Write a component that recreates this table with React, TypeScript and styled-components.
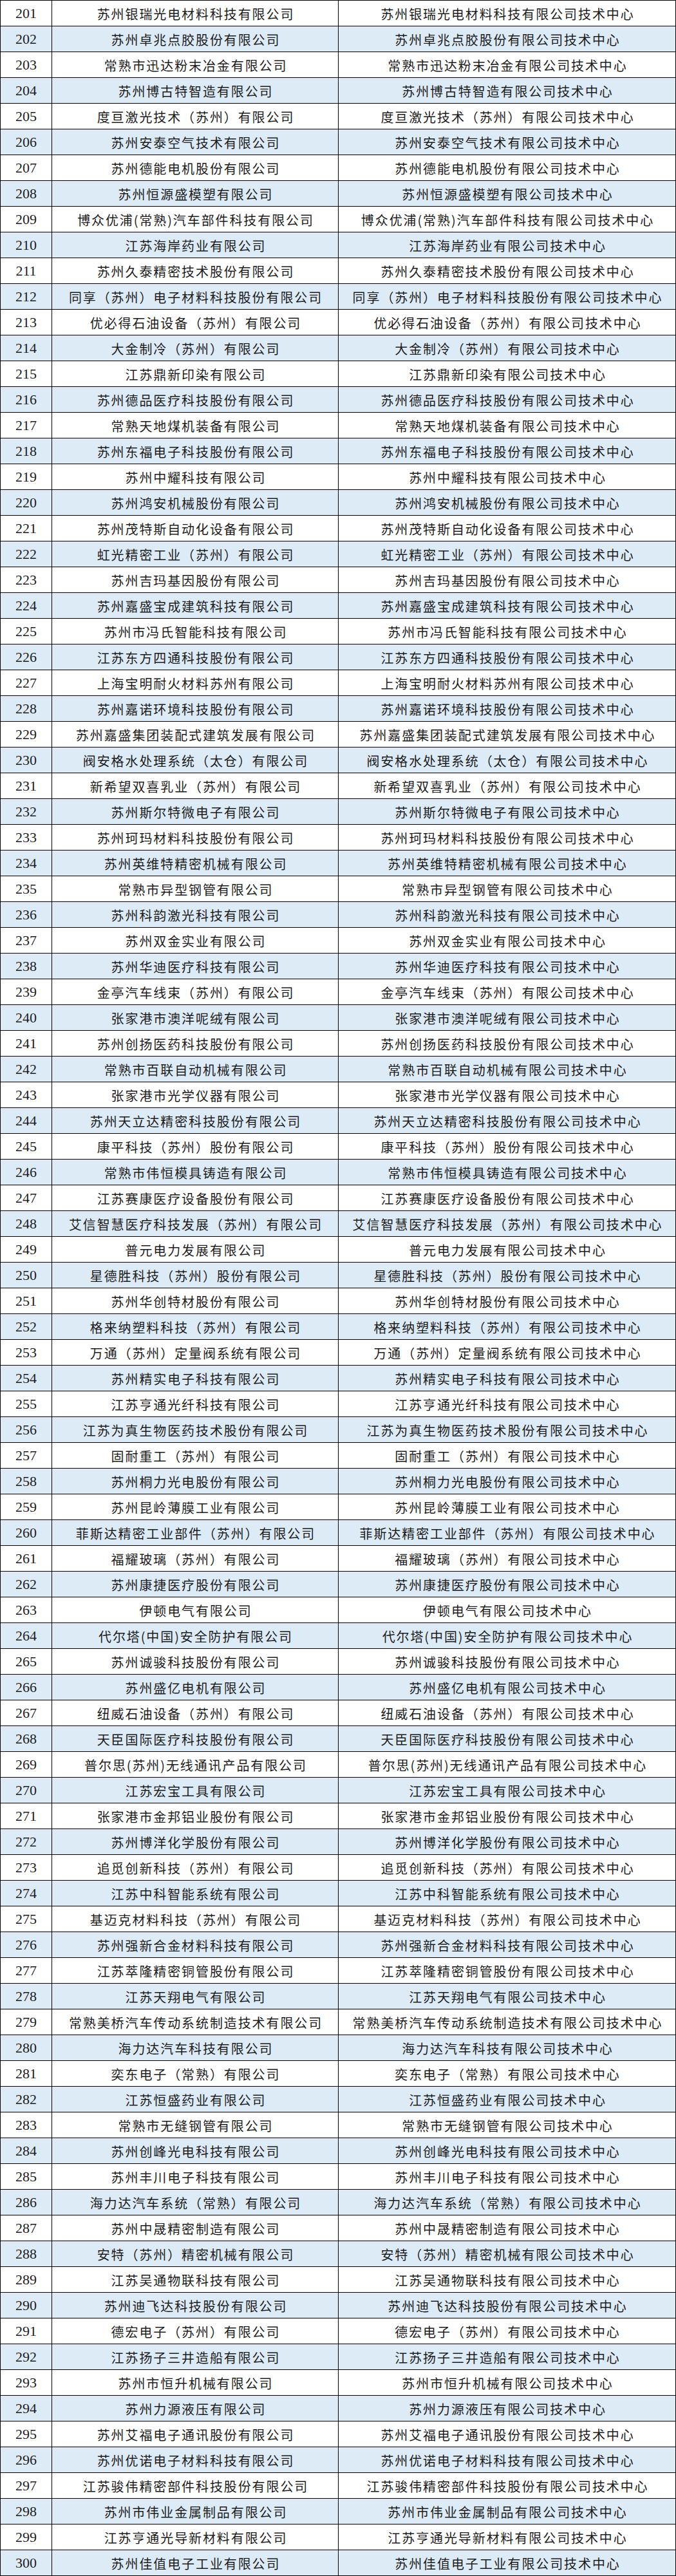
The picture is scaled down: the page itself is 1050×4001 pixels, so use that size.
import React from 'react';
import styled, { createGlobalStyle } from 'styled-components';

const companies: string[] = [
  '苏州银瑞光电材料科技有限公司',
  '苏州卓兆点胶股份有限公司',
  '常熟市迅达粉末冶金有限公司',
  '苏州博古特智造有限公司',
  '度亘激光技术（苏州）有限公司',
  '苏州安泰空气技术有限公司',
  '苏州德能电机股份有限公司',
  '苏州恒源盛模塑有限公司',
  '博众优浦(常熟)汽车部件科技有限公司',
  '江苏海岸药业有限公司',
  '苏州久泰精密技术股份有限公司',
  '同享（苏州）电子材料科技股份有限公司',
  '优必得石油设备（苏州）有限公司',
  '大金制冷（苏州）有限公司',
  '江苏鼎新印染有限公司',
  '苏州德品医疗科技股份有限公司',
  '常熟天地煤机装备有限公司',
  '苏州东福电子科技股份有限公司',
  '苏州中耀科技有限公司',
  '苏州鸿安机械股份有限公司',
  '苏州茂特斯自动化设备有限公司',
  '虹光精密工业（苏州）有限公司',
  '苏州吉玛基因股份有限公司',
  '苏州嘉盛宝成建筑科技有限公司',
  '苏州市冯氏智能科技有限公司',
  '江苏东方四通科技股份有限公司',
  '上海宝明耐火材料苏州有限公司',
  '苏州嘉诺环境科技股份有限公司',
  '苏州嘉盛集团装配式建筑发展有限公司',
  '阀安格水处理系统（太仓）有限公司',
  '新希望双喜乳业（苏州）有限公司',
  '苏州斯尔特微电子有限公司',
  '苏州珂玛材料科技股份有限公司',
  '苏州英维特精密机械有限公司',
  '常熟市异型钢管有限公司',
  '苏州科韵激光科技有限公司',
  '苏州双金实业有限公司',
  '苏州华迪医疗科技有限公司',
  '金亭汽车线束（苏州）有限公司',
  '张家港市澳洋呢绒有限公司',
  '苏州创扬医药科技股份有限公司',
  '常熟市百联自动机械有限公司',
  '张家港市光学仪器有限公司',
  '苏州天立达精密科技股份有限公司',
  '康平科技（苏州）股份有限公司',
  '常熟市伟恒模具铸造有限公司',
  '江苏赛康医疗设备股份有限公司',
  '艾信智慧医疗科技发展（苏州）有限公司',
  '普元电力发展有限公司',
  '星德胜科技（苏州）股份有限公司',
  '苏州华创特材股份有限公司',
  '格来纳塑料科技（苏州）有限公司',
  '万通（苏州）定量阀系统有限公司',
  '苏州精实电子科技有限公司',
  '江苏亨通光纤科技有限公司',
  '江苏为真生物医药技术股份有限公司',
  '固耐重工（苏州）有限公司',
  '苏州桐力光电股份有限公司',
  '苏州昆岭薄膜工业有限公司',
  '菲斯达精密工业部件（苏州）有限公司',
  '福耀玻璃（苏州）有限公司',
  '苏州康捷医疗股份有限公司',
  '伊顿电气有限公司',
  '代尔塔(中国)安全防护有限公司',
  '苏州诚骏科技股份有限公司',
  '苏州盛亿电机有限公司',
  '纽威石油设备（苏州）有限公司',
  '天臣国际医疗科技股份有限公司',
  '普尔思(苏州)无线通讯产品有限公司',
  '江苏宏宝工具有限公司',
  '张家港市金邦铝业股份有限公司',
  '苏州博洋化学股份有限公司',
  '追觅创新科技（苏州）有限公司',
  '江苏中科智能系统有限公司',
  '基迈克材料科技（苏州）有限公司',
  '苏州强新合金材料科技有限公司',
  '江苏萃隆精密铜管股份有限公司',
  '江苏天翔电气有限公司',
  '常熟美桥汽车传动系统制造技术有限公司',
  '海力达汽车科技有限公司',
  '奕东电子（常熟）有限公司',
  '江苏恒盛药业有限公司',
  '常熟市无缝钢管有限公司',
  '苏州创峰光电科技有限公司',
  '苏州丰川电子科技有限公司',
  '海力达汽车系统（常熟）有限公司',
  '苏州中晟精密制造有限公司',
  '安特（苏州）精密机械有限公司',
  '江苏吴通物联科技有限公司',
  '苏州迪飞达科技股份有限公司',
  '德宏电子（苏州）有限公司',
  '江苏扬子三井造船有限公司',
  '苏州市恒升机械有限公司',
  '苏州力源液压有限公司',
  '苏州艾福电子通讯股份有限公司',
  '苏州优诺电子材料科技有限公司',
  '江苏骏伟精密部件科技股份有限公司',
  '苏州市伟业金属制品有限公司',
  '江苏亨通光导新材料有限公司',
  '苏州佳值电子工业有限公司',
];

const GlobalStyle = createGlobalStyle`
  html, body {
    margin: 0;
    padding: 0;
    background: #fff;
  }
  * {
    box-sizing: border-box;
  }
`;

const App: React.FC = () => {
  return (
    <>
      <GlobalStyle />
      <Table>
        {companies.map((name, i) => (
          <Row key={i} $shaded={i % 2 === 1}>
            <NumCell>{201 + i}</NumCell>
            <NameCell>{name}</NameCell>
            <NameCell>{name}技术中心</NameCell>
          </Row>
        ))}
      </Table>
    </>
  );
};

const Table = styled.div`
  width: 1050px;
  border-top: 1px solid #000;
  color: #1c1c1c;
`;

const Row = styled.div<{ $shaded: boolean }>`
  display: grid;
  grid-template-columns: 81px 445px 524px;
  height: 40px;
  border-bottom: 1px solid #000;
  background: ${(p) => (p.$shaded ? '#ddebf7' : '#ffffff')};
`;

const Cell = styled.div`
  display: flex;
  align-items: center;
  justify-content: center;
  border-right: 1px solid #000;
  white-space: nowrap;
  line-height: 1;
`;

const NumCell = styled(Cell)`
  border-left: 1px solid #000;
  font-family: 'Liberation Serif', serif;
  font-size: 22px;
  padding-top: 1px;
`;

const NameCell = styled(Cell)`
  font-family: 'Noto Sans CJK SC', 'Noto Sans', sans-serif;
  font-size: 20px;
  letter-spacing: 1.9px;
  padding: 3px 0 0 2px;
`;

export default App;
